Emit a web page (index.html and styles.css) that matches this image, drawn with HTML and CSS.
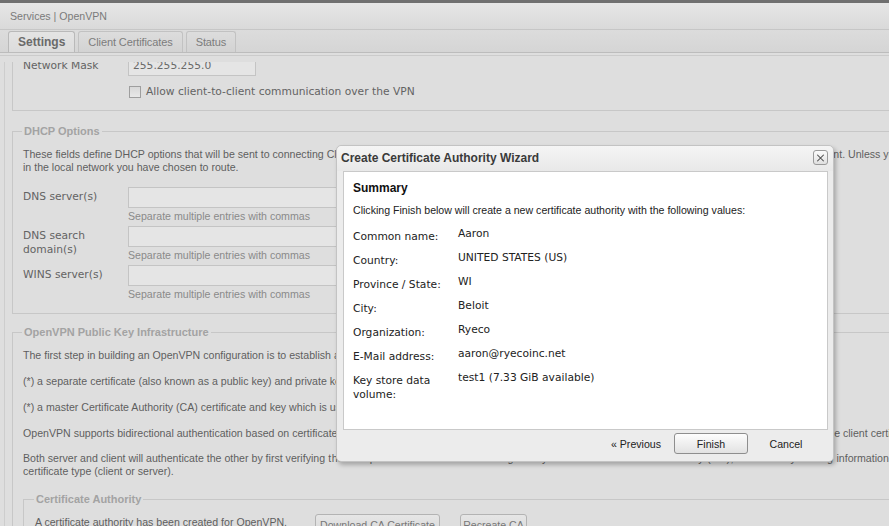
FILE: index.html
```html
<!DOCTYPE html>
<html>
<head>
<meta charset="utf-8">
<title>Services | OpenVPN</title>
<link rel="stylesheet" href="styles.css">
</head>
<body>
<div class="app">
  <div class="topstrip"></div>
  <div class="header">Services | OpenVPN</div>
  <div class="tabbar">
    <div class="tab active">Settings</div>
    <div class="tab">Client Certificates</div>
    <div class="tab">Status</div>
  </div>
  <div class="panel">
    <div class="viewport">
      <div class="scroll">
        <fieldset class="fs fs-net">
          <div class="frow frow-net">
            <div class="flabel">Network Mask</div>
            <div class="inp inp-short">255.255.255.0</div>
          </div>
          <div class="chkrow"><span class="cb"></span><span>Allow client-to-client communication over the VPN</span></div>
        </fieldset>

        <fieldset class="fs fs-dhcp">
          <legend>DHCP Options</legend>
          <p class="desc nowrap">These fields define DHCP options that will be sent to connecting Clients when they connect to the server. Provide them if clients use name resolution for hosts that are prese<span class="under-c">nt. Unless you specify these values, clients keep their own settings.</span><br>in the local network you have chosen to route.</p>
          <div class="frows">
            <div class="frow">
              <div class="flabel">DNS server(s)</div>
              <div class="fcol"><div class="inp"></div><div class="hint">Separate multiple entries with commas</div></div>
            </div>
            <div class="frow">
              <div class="flabel">DNS search domain(s)</div>
              <div class="fcol"><div class="inp"></div><div class="hint">Separate multiple entries with commas</div></div>
            </div>
            <div class="frow">
              <div class="flabel">WINS server(s)</div>
              <div class="fcol"><div class="inp"></div><div class="hint">Separate multiple entries with commas</div></div>
            </div>
          </div>
        </fieldset>

        <fieldset class="fs fs-pki">
          <legend>OpenVPN Public Key Infrastructure</legend>
          <p class="desc nowrap">The first step in building an OpenVPN configuration is to establish a PKI (public key infrastructure). The PKI consists of:</p>
          <p class="desc nowrap">(*) a separate certificate (also known as a public key) and private key for the server and each client, and</p>
          <p class="desc nowrap">(*) a master Certificate Authority (CA) certificate and key which is used to sign each of the server and client certificates.</p>
          <p class="desc nowrap">OpenVPN supports bidirectional authentication based on certificat<span class="under">es, meaning that the client must authenticate the server certificate and the server must authenticate th</span>e client certificate before mutual trust is established.</p>
          <p class="desc desc-tight nowrap">Both server and client will authenticate the other by first verifying<span class="under under-b"> that the presented certificate was signed by the master certificate authority (CA), and then by testing </span>information in the now-authenticated certificate header, such as the certificate common name or<br>certificate type (client or server).</p>

          <fieldset class="fs fs-ca">
            <legend>Certificate Authority</legend>
            <div class="carow">
              <span class="catext">A certificate authority has been created for OpenVPN.</span>
              <button class="btn btn-dl">Download CA Certificate</button>
              <button class="btn btn-re">Recreate CA</button>
            </div>
          </fieldset>
        </fieldset>
      </div>
    </div>
  </div>
</div>

<div class="dialog">
  <div class="dlg-title">
    <span>Create Certificate Authority Wizard</span>
    <span class="dlg-close"><svg width="14" height="14" viewBox="0 0 14 14"><path d="M3.5 3.5 L10.5 10.5 M10.5 3.5 L3.5 10.5" stroke="#444" stroke-width="1.1" fill="none"/></svg></span>
  </div>
  <div class="dlg-body">
    <div class="dlg-h">Summary</div>
    <div class="dlg-intro">Clicking Finish below will create a new certificate authority with the following values:</div>
    <div class="kv">
      <div class="k">Common name:</div><div class="v">Aaron</div>
      <div class="k">Country:</div><div class="v">UNITED STATES (US)</div>
      <div class="k">Province / State:</div><div class="v">WI</div>
      <div class="k">City:</div><div class="v">Beloit</div>
      <div class="k">Organization:</div><div class="v">Ryeco</div>
      <div class="k">E-Mail address:</div><div class="v">aaron@ryecoinc.net</div>
      <div class="k">Key store data volume:</div><div class="v">test1 (7.33 GiB available)</div>
    </div>
  </div>
  <div class="dlg-foot">
    <button class="fbtn">« Previous</button>
    <button class="fbtn primary">Finish</button>
    <button class="fbtn">Cancel</button>
  </div>
</div>
</body>
</html>
```

FILE: styles.css
```css
* { box-sizing: border-box; }
html, body { margin: 0; padding: 0; overflow: hidden; }
body {
  width: 889px;
  height: 526px;
  position: relative;
  background: #dedede;
  font-family: "Liberation Sans", Arial, sans-serif;
  font-size: 10.6px;
  color: #5e5e5e;
}
.app { width: 1200px; }

.topstrip { height: 3px; background: #707070; }

.header {
  height: 27px;
  padding-left: 10px;
  display: flex;
  align-items: center;
  background: linear-gradient(#e6e6e6, #d9d9d9);
  border-bottom: 1px solid #c6c6c6;
  color: #7a7a7a;
}

.tabbar {
  height: 23px;
  padding: 1px 0 0 8px;
  display: flex;
  align-items: stretch;
  gap: 3px;
  background: linear-gradient(#dcdcdc, #d5d5d5);
  border-bottom: 1px solid #bcbcbc;
}
.tab {
  padding: 0 9px;
  display: flex;
  align-items: center;
  border: 1px solid #c2c2c2;
  border-bottom: none;
  border-radius: 3px 3px 0 0;
  background: linear-gradient(#dddddd, #d3d3d3);
  color: #7c7c7c;
  font-size: 11px;
  letter-spacing: -0.1px;
}
.tab.active {
  font-weight: bold;
  font-size: 12px;
  letter-spacing: 0;
  background: linear-gradient(#e4e4e4, #dcdcdc);
  border-color: #b9b9b9;
  color: #6a6a6a;
}

.panel {
  margin-top: 2px;
  border-top: 1px solid #cbcbcb;
  padding-top: 6px;
}
.viewport { height: 470px; overflow: hidden; }
.scroll {
  margin: -7px 0 0 4px;
  border-left: 1px solid #cdcdcd;
  padding-left: 7px;
}

.fs {
  margin: 0;
  min-width: 0;
  border: 1px solid #c7c7c7;
  padding: 0 10px 12px 10px;
}
.fs legend {
  padding: 0 2px;
  margin-left: -1px;
  font-weight: bold;
  font-size: 11px;
  line-height: 13px;
  color: #a3a3a3;
}

.fs-net { border-top: none; padding-bottom: 12px; }
.fs-dhcp { margin-top: 14px; padding-bottom: 12px; }
.fs-pki { margin-top: 12px; }
.fs-ca { margin-top: 15px; padding-left: 11px; }

.frow {
  display: grid;
  grid-template-columns: 105px auto;
  align-items: start;
}
.flabel {
  font-family: "DejaVu Sans", Verdana, sans-serif;
  font-size: 10.7px;
  line-height: 14px;
  padding-top: 3px;
  color: #636363;
}
.frow-net .flabel { line-height: 21px; padding-top: 0; }

.inp {
  height: 21px;
  width: 300px;
  border: 1px solid #c4c4c4;
  background: #e5e5e5;
  padding: 0 4px;
  display: flex;
  align-items: center;
  font-family: "DejaVu Sans", Verdana, sans-serif;
  font-size: 10.7px;
  color: #6a6a6a;
}
.inp-short { width: 128px; align-items: flex-start; padding-top: 3px; }

.hint {
  margin-top: 1px;
  line-height: 14px;
  color: #8a8a8a;
}

.chkrow {
  margin: 9px 0 0 106px;
  display: flex;
  align-items: center;
  gap: 5px;
  font-family: "DejaVu Sans", Verdana, sans-serif;
  font-size: 10.7px;
  line-height: 13px;
  color: #636363;
}
.cb {
  width: 12px;
  height: 12px;
  border: 1px solid #9e9e9e;
  background: linear-gradient(#d8d8d8, #e8e8e8);
}

.desc { margin: 13px 0 0; line-height: 13px; }
.fs legend + .desc { margin-top: 10px; }
.desc-tight { margin-top: 12px; }
.nowrap { white-space: nowrap; }
.under { letter-spacing: 0.24px; }
.under-b { letter-spacing: 0.35px; }
.under-c { margin-left: 2px; }

.frows {
  margin-top: 13px;
  display: grid;
  row-gap: 3px;
}

.carow {
  margin-top: 8px;
  display: flex;
  align-items: flex-start;
}
.catext { width: 280px; line-height: 14px; padding-top: 1px; }
.btn {
  height: 21px;
  margin-right: 20px;
  padding: 0;
  font: inherit;
  color: #777;
  border: 1px solid #b3b3b3;
  border-radius: 3px;
  background: linear-gradient(#e6e6e6, #d8d8d8);
}
.btn-dl { width: 125px; }
.btn-re { width: 67px; }

/* Dialog */
.dialog {
  position: absolute;
  left: 336px;
  top: 145px;
  width: 498px;
  height: 317px;
  border: 1px solid #c3c3c3;
  border-radius: 5px;
  background: #ececec;
  box-shadow: 2px 3px 4px rgba(0, 0, 0, 0.25);
  color: #222;
}
.dlg-title {
  height: 25px;
  padding: 0 5px 2px 4px;
  display: flex;
  align-items: center;
  justify-content: space-between;
  font-weight: bold;
  font-size: 12px;
  color: #3a3a3a;
  background: linear-gradient(#f5f5f5, #e8e8e8);
  border-radius: 5px 5px 0 0;
}
.dlg-close {
  width: 15px;
  height: 15px;
  border: 1px solid #9a9a9a;
  border-radius: 3px;
  background: linear-gradient(#fbfbfb, #e0e0e0);
  display: flex;
  align-items: center;
  justify-content: center;
}
.dlg-close svg { display: block; }

.dlg-body {
  margin: 0 5px 0 6px;
  height: 259px;
  background: #fff;
  border: 1px solid #c9c9c9;
  padding: 10px 9px;
}
.dlg-h {
  font-weight: bold;
  font-size: 12px;
  line-height: 13px;
  color: #111;
}
.dlg-intro { margin-top: 9px; line-height: 13px; color: #222; }
.kv {
  margin-top: 10px;
  display: grid;
  grid-template-columns: 105px auto;
  row-gap: 7px;
  font-family: "DejaVu Sans", Verdana, sans-serif;
  font-size: 10.7px;
  line-height: 14px;
  color: #222;
}
.k { padding-top: 3px; padding-right: 8px; }

.dlg-foot {
  height: 30px;
  padding: 3px 10px 0 0;
  display: flex;
  justify-content: flex-end;
  align-items: flex-start;
  gap: 1px;
}
.fbtn {
  width: 74px;
  height: 21px;
  padding: 0;
  font: inherit;
  font-size: 10.6px;
  color: #222;
  background: transparent;
  border: 1px solid transparent;
  border-radius: 3px;
}
.fbtn.primary {
  border-color: #8e8e8e;
  background: linear-gradient(#fdfdfd, #e2e2e2);
}
```
